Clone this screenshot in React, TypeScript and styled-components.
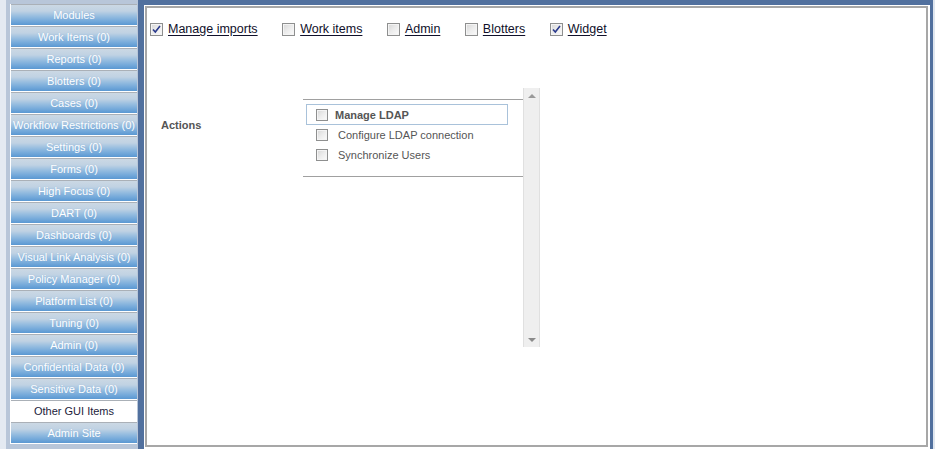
import React from "react";
import styled, { createGlobalStyle, css } from "styled-components";

const Global = createGlobalStyle`
  html, body { margin: 0; padding: 0; background: #dfe6ef; }
  body { font-family: "Liberation Sans", Arial, sans-serif; }
  * { box-sizing: border-box; }
`;

const Page = styled.div`
  display: flex;
  width: 935px;
  height: 449px;
  overflow: hidden;
  background: #dfe6ef;
`;

const Sidebar = styled.nav`
  width: 138px;
  flex: none;
  height: 100%;
  background: #b8c6d9;
  border-left: 6px solid #e4eaf2;
  padding: 3px 1px 0 4px;
`;

const NavList = styled.ul`
  list-style: none;
  margin: 0;
  padding: 0 0 1px 0;
  background: #ffffff;
  border-left: 1px solid #ffffff;
`;

const NavButton = styled.li<{ $selected?: boolean }>`
  margin-top: 1px;
  height: 21px;
  border-top: 1px solid #aab0b7;
  display: flex;
  align-items: center;
  justify-content: center;
  font-size: 11px;
  white-space: nowrap;
  overflow: hidden;
  ${(p) =>
    p.$selected
      ? css`
          background: #ffffff;
          color: #1c1c3c;
        `
      : css`
          background: linear-gradient(
            to bottom,
            #cbd8e4 0%,
            #c0d2e3 30%,
            #98bee0 55%,
            #74a9da 80%,
            #5a98d2 100%
          );
          color: #ffffff;
          text-shadow: 0 0 1px rgba(110, 160, 210, 0.5);
        `}
`;

const Frame = styled.main`
  flex: 1;
  height: 100%;
  margin-right: 2px;
  background: #ffffff;
  border-style: solid;
  border-color: #51709e;
  border-width: 5px 3px 0 6px;
  padding: 1px 2px 2px 1px;
  display: flex;
`;

const Content = styled.div`
  flex: 1;
  border: 2px solid #a7a7a7;
  background: #ffffff;
  padding: 13px 0 0 3px;
`;

const TopRow = styled.div`
  display: flex;
  align-items: center;
  height: 16px;
  gap: 24.5px;
`;

const TopItem = styled.label`
  display: flex;
  align-items: center;
  gap: 5px;
`;

const CheckBox = styled.span<{ $size: number }>`
  position: relative;
  display: inline-block;
  width: ${(p) => p.$size}px;
  height: ${(p) => p.$size}px;
  border: 1px solid #8e8f8f;
  background: linear-gradient(135deg, #d6d6d6 0%, #ececec 50%, #fbfbfb 100%);
  box-shadow: inset 0 0 0 1px #f4f4f4;
  flex: none;
`;

const CheckMark = styled.svg`
  position: absolute;
  left: 1px;
  top: 1px;
`;

const TopLabel = styled.span`
  font-size: 12.5px;
  color: #10102a;
  text-decoration: underline;
  text-underline-offset: 2px;
  white-space: nowrap;
`;

const Section = styled.section`
  display: flex;
  margin-top: 51px;
`;

const SectionLabel = styled.div`
  width: 153px;
  padding: 31px 0 0 11px;
  font-size: 11px;
  font-weight: bold;
  color: #555555;
`;

const TreeBox = styled.div`
  display: flex;
  width: 237px;
  height: 259px;
`;

const TreeArea = styled.div`
  width: 220px;
  padding-top: 11px;
`;

const TreeList = styled.ul`
  list-style: none;
  margin: 0;
  padding: 4px 0 11px 0;
  border-top: 1px solid #a0a0a0;
  border-bottom: 1px solid #a0a0a0;
`;

const TreeRow = styled.li<{ $focused?: boolean }>`
  display: flex;
  align-items: center;
  margin-left: 3px;
  width: 202px;
  height: ${(p) => (p.$focused ? 21 : 20)}px;
  padding-left: 9px;
  border: 1px solid ${(p) => (p.$focused ? "#a9c2da" : "transparent")};
`;

const TreeText = styled.span<{ $bold?: boolean }>`
  margin-left: ${(p) => (p.$bold ? 7 : 10)}px;
  font-size: 11px;
  color: #555555;
  font-weight: ${(p) => (p.$bold ? "bold" : "normal")};
  white-space: nowrap;
`;

const Scrollbar = styled.div`
  width: 17px;
  height: 100%;
  background: #efefef;
  border-left: 1px solid #e0e0e0;
  border-right: 1px solid #e0e0e0;
  display: flex;
  flex-direction: column;
  justify-content: space-between;
  align-items: center;
  padding: 6px 0 5px 0;
`;

const Arrow = styled.span<{ $up?: boolean }>`
  width: 0;
  height: 0;
  border-left: 4px solid transparent;
  border-right: 4px solid transparent;
  ${(p) =>
    p.$up
      ? css`border-bottom: 4px solid #9a9a9a;`
      : css`border-top: 4px solid #8a8a8a;`}
`;

const navItems = [
  "Modules",
  "Work Items (0)",
  "Reports (0)",
  "Blotters (0)",
  "Cases (0)",
  "Workflow Restrictions (0)",
  "Settings (0)",
  "Forms (0)",
  "High Focus (0)",
  "DART (0)",
  "Dashboards (0)",
  "Visual Link Analysis (0)",
  "Policy Manager (0)",
  "Platform List (0)",
  "Tuning (0)",
  "Admin (0)",
  "Confidential Data (0)",
  "Sensitive Data (0)",
  "Other GUI Items",
  "Admin Site",
];

const modules = [
  { label: "Manage imports", checked: true },
  { label: "Work items", checked: false },
  { label: "Admin", checked: false },
  { label: "Blotters", checked: false },
  { label: "Widget", checked: true },
];

const actions = [
  { label: "Manage LDAP", bold: true },
  { label: "Configure LDAP connection", bold: false },
  { label: "Synchronize Users", bold: false },
];

function Check({ checked, size }: { checked?: boolean; size: number }) {
  return (
    <CheckBox $size={size}>
      {checked && (
        <CheckMark width="9" height="9" viewBox="0 0 9 9">
          <path d="M1 4.5 L3.3 7 L8 1" fill="none" stroke="#2a3a8c" strokeWidth="1.6" />
        </CheckMark>
      )}
    </CheckBox>
  );
}

export default function App() {
  return (
    <>
      <Global />
      <Page>
        <Sidebar>
          <NavList>
            {navItems.map((n) => (
              <NavButton key={n} $selected={n === "Other GUI Items"}>
                {n}
              </NavButton>
            ))}
          </NavList>
        </Sidebar>
        <Frame>
          <Content>
            <TopRow>
              {modules.map((m) => (
                <TopItem key={m.label}>
                  <Check checked={m.checked} size={13} />
                  <TopLabel>{m.label}</TopLabel>
                </TopItem>
              ))}
            </TopRow>
            <Section>
              <SectionLabel>Actions</SectionLabel>
              <TreeBox>
                <TreeArea>
                  <TreeList>
                    {actions.map((a, i) => (
                      <TreeRow key={a.label} $focused={i === 0}>
                        <Check size={12} />
                        <TreeText $bold={a.bold}>{a.label}</TreeText>
                      </TreeRow>
                    ))}
                  </TreeList>
                </TreeArea>
                <Scrollbar>
                  <Arrow $up />
                  <Arrow />
                </Scrollbar>
              </TreeBox>
            </Section>
          </Content>
        </Frame>
      </Page>
    </>
  );
}
